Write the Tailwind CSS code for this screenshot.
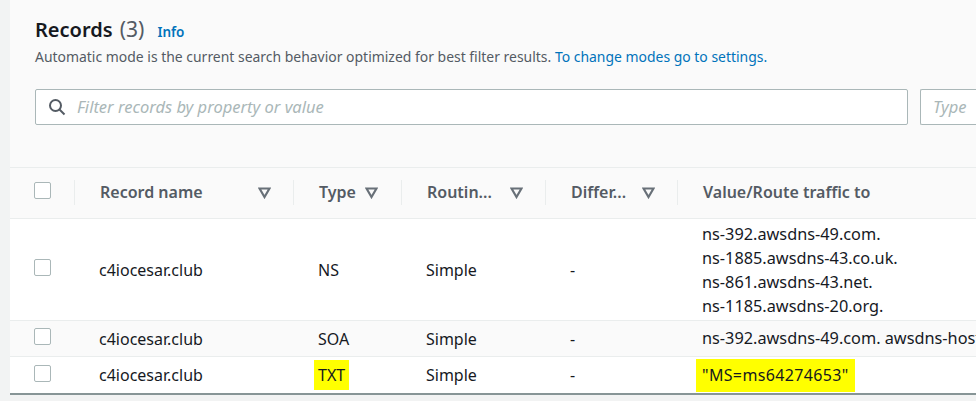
<!DOCTYPE html>
<html lang="en">
<head>
    <meta charset="UTF-8">
    <title>Records</title>
    <script src="https://cdn.jsdelivr.net/npm/@tailwindcss/browser@4"></script>
</head>
<body class="h-[401px] w-[976px] overflow-hidden bg-[#f2f3f3] pl-[10px] font-['Noto_Sans',sans-serif] text-[16px] text-[#16191f]">

    <!-- panel header -->
    <div class="h-[168px] border-b border-[#eaeded] bg-[#fafafa] pl-[25px]">
        <div class="flex items-baseline pt-[14px]">
            <h2 class="text-[20px] leading-[30px] font-semibold text-[#16191f]">Records <span class="ml-[2px] text-[21px] font-normal text-[#545b64]">(3)</span></h2>
            <a class="ml-[13px] text-[13.5px] font-semibold text-[#0073bb]">Info</a>
        </div>
        <p class="mt-[3px] text-[13.95px] leading-[18px] whitespace-nowrap text-[#545b64]">Automatic mode is the current search behavior optimized for best filter results. <span class="text-[#0073bb]">To change modes go to settings.</span></p>
        <div class="mt-[23px] flex gap-[12px]">
            <div class="flex h-[36px] w-[873px] items-center rounded-[2px] border border-[#aab7b8] bg-white pl-[12px]">
                <svg class="h-[18px] w-[18px]" viewBox="0 0 18 18" fill="none" stroke="#545b64" stroke-width="2"><circle cx="7.5" cy="7.5" r="5.5"/><path d="M11.5 11.5l5 5"/></svg>
                <span class="ml-[11px] text-[16.5px] text-[#aab7b8] italic">Filter records by property or value</span>
            </div>
            <div class="flex h-[36px] flex-1 items-center rounded-l-[2px] border border-r-0 border-[#aab7b8] bg-white pl-[12px]">
                <span class="text-[16.5px] text-[#aab7b8] italic">Type</span>
            </div>
        </div>
    </div>

    <!-- column headers -->
    <div class="grid h-[51px] grid-cols-[64px_219px_108px_144px_132px_1fr] items-center border-b border-[#eaeded] bg-[#fafafa] pb-[2px] text-[16px] font-semibold text-[#545b64]">
        <div class="pl-[24px]"><div class="mb-[3px] h-[17px] w-[17px] rounded-[2px] border border-[#aab7b8] bg-white"></div></div>
        <div class="flex h-[25px] items-center justify-between border-l border-[#eaeded] pr-[22px] pl-[25px]">Record name
            <svg class="h-[13px] w-[13px]" viewBox="0 0 13 13" fill="none" stroke="#687078" stroke-width="2.2"><path d="M1.5 2.5h10L6.5 11z"/></svg>
        </div>
        <div class="flex h-[25px] items-center border-l border-[#eaeded] pl-[25px]">Type
            <svg class="ml-[9px] h-[13px] w-[13px]" viewBox="0 0 13 13" fill="none" stroke="#687078" stroke-width="2.2"><path d="M1.5 2.5h10L6.5 11z"/></svg>
        </div>
        <div class="flex h-[25px] items-center justify-between border-l border-[#eaeded] pr-[22px] pl-[25px]">Routin...
            <svg class="h-[13px] w-[13px]" viewBox="0 0 13 13" fill="none" stroke="#687078" stroke-width="2.2"><path d="M1.5 2.5h10L6.5 11z"/></svg>
        </div>
        <div class="flex h-[25px] items-center justify-between border-l border-[#eaeded] pr-[22px] pl-[25px]">Differ...
            <svg class="h-[13px] w-[13px]" viewBox="0 0 13 13" fill="none" stroke="#687078" stroke-width="2.2"><path d="M1.5 2.5h10L6.5 11z"/></svg>
        </div>
        <div class="flex h-[25px] items-center border-l border-[#eaeded] pl-[25px]">Value/Route traffic to</div>
    </div>

    <!-- rows -->
    <div class="grid h-[102px] grid-cols-[64px_219px_108px_144px_132px_1fr] items-center border-b border-[#eaeded] bg-white">
        <div class="pl-[24px]"><div class="mb-[4px] h-[17px] w-[17px] rounded-[2px] border border-[#aab7b8] bg-white"></div></div>
        <div class="pl-[25px]">c4iocesar.club</div>
        <div class="pl-[25px]">NS</div>
        <div class="pl-[25px]">Simple</div>
        <div class="pl-[25px]">-</div>
        <div class="pl-[25px] text-[16.3px] leading-[24px]">
            <div>ns-392.awsdns-49.com.</div>
            <div>ns-1885.awsdns-43.co.uk.</div>
            <div>ns-861.awsdns-43.net.</div>
            <div>ns-1185.awsdns-20.org.</div>
        </div>
    </div>
    <div class="grid h-[36px] grid-cols-[64px_219px_108px_144px_132px_1fr] items-center border-b border-[#eaeded] bg-[#fafafa]">
        <div class="pl-[24px]"><div class="mb-[4px] h-[17px] w-[17px] rounded-[2px] border border-[#aab7b8] bg-white"></div></div>
        <div class="pl-[25px]">c4iocesar.club</div>
        <div class="pl-[25px]">SOA</div>
        <div class="pl-[25px]">Simple</div>
        <div class="pl-[25px]">-</div>
        <div class="overflow-hidden pl-[25px] text-[16.3px] whitespace-nowrap">ns-392.awsdns-49.com. awsdns-hostmaster.amazon.com. 1 7200 900 1209600 86400</div>
    </div>
    <div class="grid h-[38px] grid-cols-[64px_219px_108px_144px_132px_1fr] items-center border-b-2 border-[#879596] bg-white">
        <div class="pl-[24px]"><div class="mb-[4px] h-[17px] w-[17px] rounded-[2px] border border-[#aab7b8] bg-white"></div></div>
        <div class="pl-[25px]">c4iocesar.club</div>
        <div class="pl-[21px]"><span class="inline-block bg-[#ffff00] px-[4px] leading-[30px]">TXT</span></div>
        <div class="pl-[25px]">Simple</div>
        <div class="pl-[25px]">-</div>
        <div class="pl-[19px]"><span class="inline-block bg-[#ffff00] px-[6px] leading-[33px] tracking-[0.35px]">"MS=ms64274653"</span></div>
    </div>

</body>
</html>
